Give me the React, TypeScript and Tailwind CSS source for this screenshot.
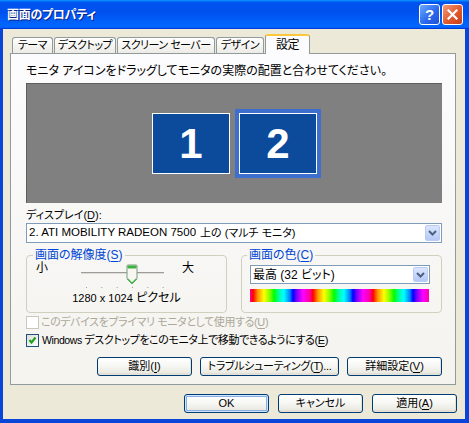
import React from "react";

const U = ({ children }: { children: React.ReactNode }) => (
  <span className="underline decoration-1 underline-offset-[2px]">{children}</span>
);

const Acc = ({ k }: { k: string }) => (
  <>
    (<U>{k}</U>)
  </>
);

function CheckBox({ checked, disabled }: { checked?: boolean; disabled?: boolean }) {
  return (
    <span
      className={
        disabled
          ? "w-[13px] h-[13px] border border-[#CAC8BB] bg-white shrink-0"
          : "w-[13px] h-[13px] border border-[#1C5180] bg-[linear-gradient(135deg,#DCDCD7,#FFFFFF)] shrink-0 flex items-center justify-center"
      }
    >
      {checked && (
        <svg width="11" height="11" viewBox="0 0 11 11">
          <path d="M2.5 5 L4.5 7.5 L8.5 2.5" fill="none" stroke="#21A121" strokeWidth="2.2" />
        </svg>
      )}
    </span>
  );
}

function ComboArrow() {
  return (
    <span className="w-[15px] self-stretch m-[1px] rounded-[2px] border border-[#BACCF5] bg-[linear-gradient(to_bottom,#DCE6FE,#B4C9F7)] flex items-center justify-center">
      <svg width="9" height="6" viewBox="0 0 9 6">
        <path d="M1 1 L4.5 4.5 L8 1" fill="none" stroke="#4D6185" strokeWidth="2" />
      </svg>
    </span>
  );
}

function Btn({ className, focused, children }: { className: string; focused?: boolean; children: React.ReactNode }) {
  return (
    <div
      className={
        "h-[19px] rounded-[3px] border border-[#003C74] bg-[linear-gradient(to_bottom,#FFFFFF_0%,#F7F7F4_45%,#EBEAE3_85%,#D6D0C5_100%)] flex items-center justify-center leading-none whitespace-nowrap text-[11px] " +
        (focused
          ? "shadow-[inset_0_0_0_1px_#CEE7FF,inset_0_0_0_2px_#89ADE4] "
          : "shadow-[inset_-1px_-1px_0_#E3E2DA] ") +
        className
      }
    >
      {children}
    </div>
  );
}

function Slider() {
  const ticks = [9, 24.3, 39.7, 55, 70.3, 85.7];
  return (
    <svg width="95" height="26" viewBox="0 0 95 26" className="shrink-0">
      <rect x="4" y="9" width="83" height="1" fill="#9D9C99" />
      <rect x="4" y="10" width="83" height="1" fill="#DCDBD4" />
      {ticks.map((t) => (
        <rect key={t} x={t} y="24" width="1" height="1" fill="#A0A0A0" />
      ))}
      <path d="M50 3 Q50 2 51 2 H59 Q60 2 60 3 V16 L55 21 L50 16 Z" fill="#F7F6F0" stroke="#7C9A84" strokeWidth="1" />
      <rect x="50.5" y="2.5" width="9" height="3" rx="1" fill="#3FB241" />
      <path d="M50.8 16 L55 20.2 L59.2 16" fill="none" stroke="#4CB850" strokeWidth="1.4" />
    </svg>
  );
}

export default function App() {
  const tabs = [
    { t: "テーマ", w: "w-[41px]" },
    { t: "デスクトップ", w: "w-[62px]" },
    { t: "スクリーン セーバー", w: "w-[98px]" },
    { t: "デザイン", w: "w-[48px]" },
  ];
  return (
    <div className="w-[469px] h-[423px] flex flex-col bg-[#0A45DA] overflow-hidden font-['Liberation_Sans','Noto_Sans_CJK_JP',sans-serif] text-[12px] text-black [font-feature-settings:'palt']">
      {/* Title bar */}
      <div className="h-[29px] shrink-0 flex items-center pl-[7px] pr-[6px] bg-[linear-gradient(to_bottom,#0997FF_0%,#0053EE_8%,#0050EE_40%,#0066FF_88%,#0066FF_93%,#005BFF_95%,#003DD7_96%,#003DD7_100%)]">
        <span className="flex-1 text-white font-bold text-[12px] tracking-[-0.3px] [text-shadow:1px_1px_0_#0A1F8A]">
          画面のプロパティ
        </span>
        <div className="flex gap-[2px]">
          <div className="w-[21px] h-[21px] rounded-[3px] border border-white bg-[linear-gradient(135deg,#6AA8FF,#2A66EA_60%,#1C52D6)] flex items-center justify-center text-white font-bold text-[15px] leading-none font-['Liberation_Sans',sans-serif]">
            ?
          </div>
          <div className="w-[21px] h-[21px] rounded-[3px] border border-white bg-[linear-gradient(135deg,#F09A7A,#E15A2E_55%,#C53E18)] flex items-center justify-center">
            <svg width="11" height="11" viewBox="0 0 11 11">
              <path d="M1.5 1.5 L9.5 9.5 M9.5 1.5 L1.5 9.5" stroke="#FFFFFF" strokeWidth="2.2" strokeLinecap="square" />
            </svg>
          </div>
        </div>
      </div>

      {/* Body */}
      <div className="flex-1 flex flex-col bg-[#ECE9D8] ml-[3px] mr-[4px] mb-[4px]">
        {/* Tabs */}
        <div className="flex items-end h-[24px] pl-[9px] gap-[1px] text-[11px] tracking-[-0.5px]">
          {tabs.map((tb) => (
            <div
              key={tb.t}
              className={
                tb.w +
                " h-[16px] border border-b-0 border-[#919B9C] rounded-t-[3px] bg-[linear-gradient(to_bottom,#FFFFFF,#ECEBE6)] flex items-center justify-center leading-none whitespace-nowrap"
              }
            >
              {tb.t}
            </div>
          ))}
          <div className="w-[45px] h-[20px] -mb-[1px] relative z-10 border-x border-[#919B9C] border-t-[2px] border-t-[#FFC83C] rounded-t-[3px] bg-[#FCFCFE] flex items-center justify-center leading-none text-[12px]">
            設定
          </div>
        </div>

        {/* Panel */}
        <div className="ml-[7px] mr-[9px] h-[332px] border border-[#919B9C] bg-[linear-gradient(to_bottom,#FCFCFE,#F4F3EE)] pl-[15px] pr-[13px] flex flex-col">
          <div className="mt-[10px] leading-[14px] whitespace-nowrap">
            モニタ アイコンをドラッグしてモニタの実際の配置と合わせてください。
          </div>

          {/* Monitor area */}
          <div className="mt-[5px] h-[120px] bg-[#808080] border-t border-l border-[#5E5E5E] flex items-center justify-center gap-[5px] pl-[4px]">
            <div className="w-[78px] h-[61px] border border-white bg-[#0C4A9B] flex items-center justify-center text-white font-bold text-[42px] leading-none font-['Liberation_Sans',sans-serif]">
              1
            </div>
            <div className="p-[4px] bg-[#3D6FCF]">
              <div className="w-[78px] h-[61px] border border-white bg-[#0C4A9B] flex items-center justify-center text-white font-bold text-[42px] leading-none font-['Liberation_Sans',sans-serif]">
                2
              </div>
            </div>
          </div>

          <div className="mt-[5px] leading-[14px] text-[11px]">
            ディスプレイ<Acc k="D" />:
          </div>
          <div className="mt-[1px] h-[20px] border border-[#7F9DB9] bg-white flex items-stretch">
            <span className="flex-1 flex items-center pl-[2px] whitespace-nowrap">
              <span className="text-[11.5px]">2. ATI MOBILITY RADEON 7500</span>
              <span className="text-[11px] ml-[4px]">上の (マルチ モニタ)</span>
            </span>
            <ComboArrow />
          </div>

          {/* Groups */}
          <div className="mt-[6px] flex gap-[14px]">
            <fieldset className="w-[201px] h-[64px] border border-[#D0D0BF] rounded-[4px]">
              <legend className="ml-[6px] px-[2px] text-[#0046D5] leading-[12px]">
                画面の解像度<Acc k="S" />
              </legend>
              <div className="flex items-start h-[26px] mt-[2px] pl-[9px]">
                <span className="leading-[12px] -mt-[1px]">小</span>
                <span className="ml-[29px]">
                  <Slider />
                </span>
                <span className="ml-[10px] leading-[12px] -mt-[1px]">大</span>
              </div>
              <div className="mt-[3px] leading-[12px] text-center">
                <span className="text-[11px]">1280 x 1024</span> ピクセル
              </div>
            </fieldset>
            <fieldset className="flex-1 h-[64px] border border-[#D0D0BF] rounded-[4px] pl-[8px]">
              <legend className="ml-[-3px] px-[2px] text-[#0046D5] leading-[12px]">
                画面の色<Acc k="C" />
              </legend>
              <div className="mt-[4px] w-[180px] h-[19px] border border-[#7F9DB9] bg-white flex items-stretch">
                <span className="flex-1 flex items-center pl-[2px] whitespace-nowrap">最高 (32 ビット)</span>
                <ComboArrow />
              </div>
              <div className="mt-[5px] w-[179px] h-[13px] bg-[repeating-linear-gradient(to_right,#FF00A0_0px,#FF0000_3px,#FF9900_8px,#FFFF00_14px,#80FF00_20px,#00FF00_24px,#00FFC0_30px,#00FFFF_34px,#0080FF_40px,#0000FF_43px,#8000FF_47px,#FF00FF_53px,#FF00A0_60px)]" />
            </fieldset>
          </div>

          {/* Checkboxes */}
          <div className="mt-[2px] h-[14px] flex items-center gap-[2px] text-[#ACA899] whitespace-nowrap text-[11px] tracking-[-0.4px]">
            <CheckBox disabled />
            <span>
              このデバイスをプライマリ モニタとして使用する<Acc k="U" />
            </span>
          </div>
          <div className="mt-[4px] h-[14px] flex items-center gap-[3px] whitespace-nowrap text-[11px] tracking-[-0.4px]">
            <CheckBox checked />
            <span>
              <span className="text-[10.5px]">Windows</span> デスクトップをこのモニタ上で移動できるようにする<Acc k="E" />
            </span>
          </div>

          {/* Buttons */}
          <div className="mt-[10px] flex justify-end gap-[8px]">
            <Btn className="w-[95px]">
              識別<Acc k="I" />
            </Btn>
            <Btn className="w-[139px] tracking-[-0.3px]">
              トラブルシューティング<Acc k="T" />...
            </Btn>
            <Btn className="w-[95px]">
              詳細設定<Acc k="V" />
            </Btn>
          </div>
        </div>

        {/* Dialog buttons */}
        <div className="mt-[9px] flex justify-end gap-[9px] pr-[8px]">
          <Btn className="w-[85px]" focused>
            OK
          </Btn>
          <Btn className="w-[85px]">キャンセル</Btn>
          <Btn className="w-[85px]">
            適用<Acc k="A" />
          </Btn>
        </div>
      </div>
    </div>
  );
}
